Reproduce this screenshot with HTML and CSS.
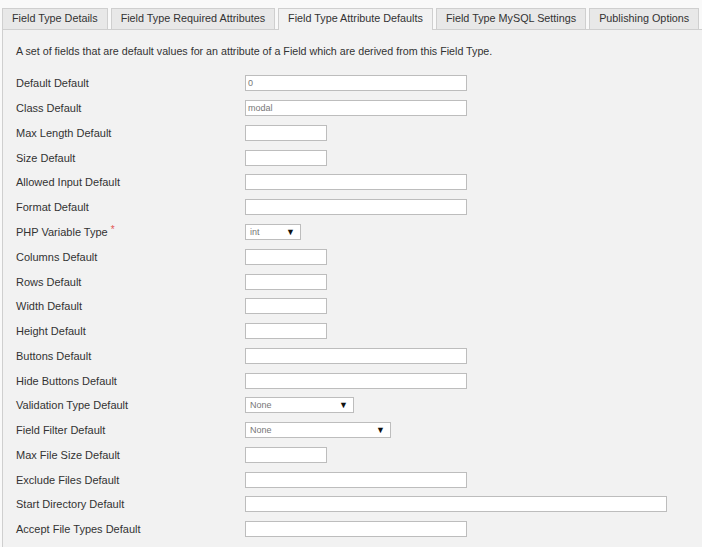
FILE: index.html
```html
<!DOCTYPE html>
<html>
<head>
<meta charset="utf-8">
<link rel="stylesheet" href="styles.css">
</head>
<body>
<div class="page">
  <ul class="tabs">
    <li class="tab">Field Type Details</li>
    <li class="tab">Field Type Required Attributes</li>
    <li class="tab active">Field Type Attribute Defaults</li>
    <li class="tab">Field Type MySQL Settings</li>
    <li class="tab">Publishing Options</li>
  </ul>
  <div class="panel">
    <p class="desc">A set of fields that are default values for an attribute of a Field which are derived from this Field Type.</p>
    <div class="rows">
      <div class="row"><span class="label">Default Default</span><span class="input long">0</span></div>
      <div class="row"><span class="label">Class Default</span><span class="input long">modal</span></div>
      <div class="row"><span class="label">Max Length Default</span><span class="input short"></span></div>
      <div class="row"><span class="label">Size Default</span><span class="input short"></span></div>
      <div class="row"><span class="label">Allowed Input Default</span><span class="input long"></span></div>
      <div class="row"><span class="label">Format Default</span><span class="input long"></span></div>
      <div class="row"><span class="label">PHP Variable Type <sup class="req">*</sup></span><span class="select sel-int"><span class="val">int</span><span class="arrow">▼</span></span></div>
      <div class="row"><span class="label">Columns Default</span><span class="input short"></span></div>
      <div class="row"><span class="label">Rows Default</span><span class="input short"></span></div>
      <div class="row"><span class="label">Width Default</span><span class="input short"></span></div>
      <div class="row"><span class="label">Height Default</span><span class="input short"></span></div>
      <div class="row"><span class="label">Buttons Default</span><span class="input long"></span></div>
      <div class="row"><span class="label">Hide Buttons Default</span><span class="input long"></span></div>
      <div class="row"><span class="label">Validation Type Default</span><span class="select sel-val"><span class="val">None</span><span class="arrow">▼</span></span></div>
      <div class="row"><span class="label">Field Filter Default</span><span class="select sel-filter"><span class="val">None</span><span class="arrow">▼</span></span></div>
      <div class="row"><span class="label">Max File Size Default</span><span class="input short"></span></div>
      <div class="row"><span class="label">Exclude Files Default</span><span class="input long"></span></div>
      <div class="row"><span class="label">Start Directory Default</span><span class="input xlong"></span></div>
      <div class="row"><span class="label">Accept File Types Default</span><span class="input long"></span></div>
    </div>
  </div>
</div>
</body>
</html>
```

FILE: styles.css
```css
html, body {
  margin: 0;
  padding: 0;
  background: #f9f9f9;
  overflow: hidden;
}
body {
  font-family: "Liberation Sans", Arial, sans-serif;
  font-size: 11px;
  color: #333;
}
.page {
  padding: 8px 0 0 2px;
}
.tabs {
  list-style: none;
  margin: 0;
  padding: 0;
  display: flex;
  gap: 3px;
  height: 21px;
}
.tab {
  box-sizing: border-box;
  height: 21px;
  padding: 0 9px;
  line-height: 19px;
  font-size: 10.8px;
  background: #e8e8e8;
  border: 1px solid #cfcfcf;
  border-bottom: none;
  color: #333;
  white-space: nowrap;
}
.tab.active {
  background: #f2f2f2;
  height: 22px;
  position: relative;
  z-index: 1;
}
.panel {
  box-sizing: border-box;
  background: #f2f2f2;
  border-top: 1px solid #cfcfcf;
  border-left: 1px solid #cfcfcf;
  padding: 0 0 0 13px;
  height: 518px;
}
.desc {
  margin: 0;
  padding-top: 14px;
  height: 27px;
  line-height: 14px;
  font-size: 10.7px;
}
.rows {
  display: flex;
  flex-direction: column;
}
.row {
  display: flex;
  align-items: center;
  height: 24.78px;
}
.label {
  width: 229px;
  flex: none;
}
.req {
  color: #e25555;
  font-size: 10px;
  vertical-align: 3px;
  line-height: 0;
}
.input, .select {
  box-sizing: border-box;
  height: 16px;
  background: #fff;
  border: 1px solid #bdbdbd;
  font-size: 9px;
  color: #777;
  padding: 0 2px;
  line-height: 14px;
  display: flex;
  align-items: center;
}
.short { width: 82px; }
.long { width: 222px; }
.xlong { width: 422px; }
.select {
  justify-content: space-between;
  padding: 0 5px 0 4px;
}
.sel-int { width: 56px; }
.sel-val { width: 109px; }
.sel-filter { width: 146px; }
.arrow {
  color: #111;
  font-size: 9px;
}
```
